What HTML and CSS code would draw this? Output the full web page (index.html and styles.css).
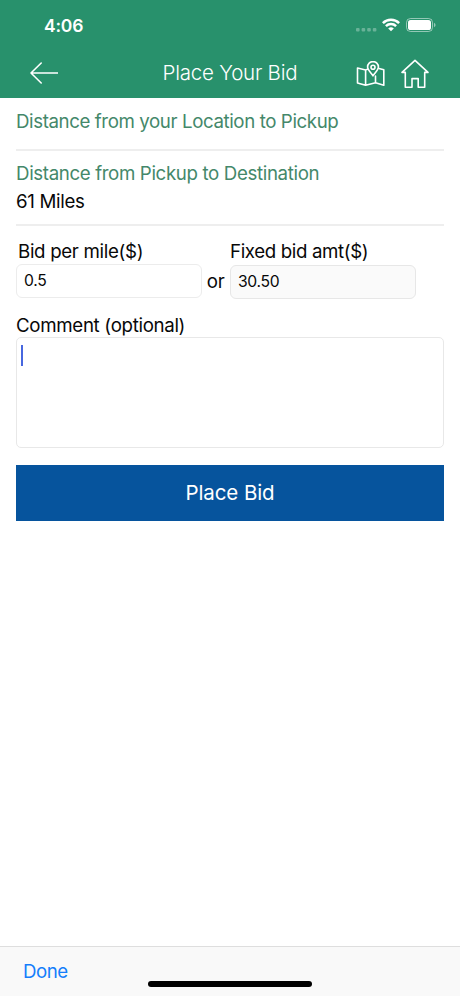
FILE: index.html
```html
<!DOCTYPE html>
<html lang="en">
<head>
<meta charset="utf-8">
<title>Place Your Bid</title>
<link rel="stylesheet" href="styles.css">
</head>
<body>
<div class="screen">
  <header class="header">
    <div class="status">
      <span class="time">4:06</span>
      <div class="indicators">
        <svg class="dots" width="21" height="4" viewBox="0 0 21 4"><rect x="0" y="0" width="3.6" height="3.6" rx="1"/><rect x="5.6" y="0" width="3.6" height="3.6" rx="1"/><rect x="11.2" y="0" width="3.6" height="3.6" rx="1"/><rect x="16.8" y="0" width="3.6" height="3.6" rx="1"/></svg>
        <svg class="wifi" width="18" height="14" viewBox="0 0 18 14" fill="none" stroke="#fff" stroke-width="2.5"><path d="M.9 5.1A11.5 11.5 0 0 1 17.1 5.1"/><path d="M3.9 8.2A7.3 7.3 0 0 1 14.1 8.2"/><path d="M9 13.3L6.2 10.5A4 4 0 0 1 11.8 10.5Z" fill="#fff" stroke="none"/></svg>
        <svg class="battery" width="30" height="14" viewBox="0 0 30 14"><rect x=".5" y=".5" width="26" height="13" rx="4" fill="none" stroke="#fff" stroke-opacity=".5"/><rect x="2" y="2" width="23" height="10" rx="2.6" fill="#fff"/><path d="M28 4.8Q29.6 5.6 29.6 7T28 9.2Z" fill="#fff" fill-opacity=".5"/></svg>
      </div>
    </div>
    <nav class="nav">
      <svg class="back" width="28" height="22" viewBox="0 0 28 22"><path d="M11.2 1L1 11L11.2 21M1 11H27.5"/></svg>
      <h1 class="title">Place Your Bid</h1>
      <div class="actions">
        <svg class="map" width="30" height="26" viewBox="0 0 30 26"><path d="M11.5 8.3L9.6 9L1.5 7V22L9.6 24.2L19.5 21.8L27.8 24.2V8.8L23 7.5M9.6 9V24.2M19.5 15V21.8"/><path d="M17 14.8C14 10.8 11.6 8.8 11.6 6A5.4 5.4 0 0 1 22.4 6C22.4 8.8 20 10.8 17 14.8Z"/><circle cx="17" cy="6.3" r="2"/></svg>
        <svg class="home" width="30" height="30" viewBox="0 0 30 30"><path d="M5.3 13.4H2L15 1.4L28 13.4H24.7V28.2H18.2V19.6H12V28.2H5.3Z"/></svg>
      </div>
    </nav>
  </header>
  <main class="content">
    <section class="row row-empty"><h2 class="label label-pickup">Distance from your Location to Pickup</h2></section>
    <section class="row row-value"><h2 class="label">Distance from Pickup to Destination</h2><p class="value">61 Miles</p></section>
    <div class="bids">
      <div class="field per-mile"><span class="caption">Bid per mile($)</span><div class="input">0.5</div></div>
      <span class="or">or</span>
      <div class="field fixed"><span class="caption">Fixed bid amt($)</span><div class="input input-off">30.50</div></div>
    </div>
    <span class="comment-label">Comment (optional)</span>
    <div class="comment"><span class="caret"></span></div>
    <div class="submit"><span>Place Bid</span></div>
  </main>
  <footer class="toolbar">
    <span class="done">Done</span>
    <span class="home-bar"></span>
  </footer>
</div>
</body>
</html>
```
FILE: styles.css
```css
* { box-sizing: border-box; }
body { margin: 0; font-family: Inter, "Liberation Sans", sans-serif; font-size: 18.7px; letter-spacing: -.32px; color: #080808; }
h1, h2, p { margin: 0; font-weight: 400; }
svg { display: block; }
.screen { width: 460px; height: 996px; background: #fff; display: flex; flex-direction: column; }
.header { height: 98px; background: #28916c; color: #fff; flex: none; }
.status { height: 50px; padding: 0 24px 0 44px; display: flex; justify-content: space-between; align-items: center; }
.time { font-size: 17.5px; font-weight: 600; letter-spacing: -.2px; }
.indicators { display: flex; align-items: center; }
.dots { fill: #fff; opacity: .3; margin: 9px 5px 0 0; }
.wifi { margin-right: 6px; }
.nav { height: 46px; padding: 0 30px; display: grid; grid-template-columns: 73px 1fr 73px; align-items: center; }
.nav svg { fill: none; stroke: #fff; stroke-width: 1.6; stroke-linejoin: round; stroke-linecap: round; }
.title { font-size: 20.5px; text-align: center; white-space: nowrap; font-weight: 300; letter-spacing: -.22px; line-height: 24px; margin-top: -1px; }
.actions { display: flex; align-items: center; gap: 14px; margin-left: -1px; padding-top: 2px; }
.actions svg { flex: none; }
.content { padding: 0 16px; flex: 1; }
.row { border-bottom: 2px solid #eee; line-height: 28px; }
.row-empty { height: 53px; padding-top: 10px; }
.row-value { height: 75px; padding-top: 9px; }
.label { font-size: 18.7px; line-height: 28px; letter-spacing: -.36px; color: #44886a; white-space: nowrap; }
.label-pickup { letter-spacing: -.4px; }
.bids { display: flex; height: 73px; padding-top: 13px; }
.field { width: 185.5px; }
.caption { display: block; height: 25px; line-height: 26px; white-space: nowrap; }
.per-mile .caption { padding-left: 2px; }
.fixed .caption { letter-spacing: -.37px; }
.input { height: 34px; border: 1px solid #ececec; border-radius: 6px; padding: 0 7px; font-size: 15.7px; line-height: 32px; }
.fixed .input { margin-top: 1px; }
.input-off { background: #fafafa; border-color: #e7e7e7; }
.or { width: 28.5px; text-align: center; padding-top: 30px; line-height: 26px; letter-spacing: 0; }
.comment-label { display: block; height: 38px; padding-top: 13px; line-height: 28px; }
.comment { height: 111px; border: 1px solid #e8e8e8; border-radius: 5px; padding: 7px 4px; }
.caret { display: block; width: 2px; height: 21px; background: #4767df; }
.submit { margin-top: 17px; height: 55.5px; background: #06549d; color: #fff; font-size: 20.5px; letter-spacing: -.1px; display: flex; align-items: center; justify-content: center; }
.toolbar { height: 50px; border-top: 1px solid #dedede; background: #f9f9f9; padding: 0 23px; display: flex; position: relative; flex: none; }
.done { color: #147efb; line-height: 50px; letter-spacing: -.5px; }
.home-bar { position: absolute; left: 148px; bottom: 9px; width: 164px; height: 6px; border-radius: 3px; background: #000; }
```
